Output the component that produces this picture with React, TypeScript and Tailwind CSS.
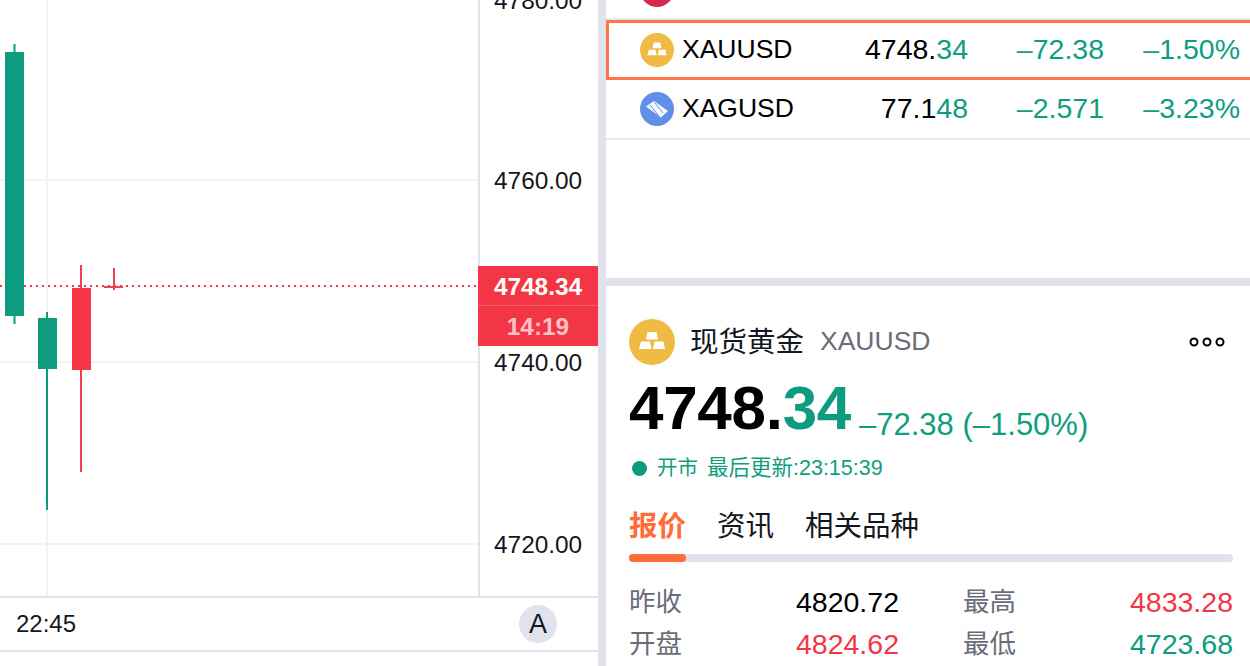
const FONT = "font-['Liberation_Sans','Noto_Sans_CJK_SC',sans-serif]";

const GoldIcon = ({ size }: { size: number }) => (
  <svg width={size} height={size} viewBox="0 0 46 46" className="shrink-0">
    <circle cx="23" cy="23" r="23" fill="#efbb45" />
    <path d="M18.5 13h9l1.5 7.5H17z" fill="#fff" />
    <path d="M12 22.5h9l1.5 7.5H10z" fill="#fff" />
    <path d="M25.500 22.500h9l1.500 7.500H24z" fill="#fff" />
  </svg>
);

const SilverIcon = () => (
  <svg width="34" height="34" viewBox="0 0 34 34" className="shrink-0">
    <circle cx="17" cy="17" r="17" fill="#5f8fe6" />
    <path d="M6 14.500L14 9l14 10-7 6.500z" fill="#fff" fillOpacity="0.95" />
    <path d="M10 13l8.500 10.500M14.500 10.500l8.500 10.500" stroke="#5f8fe6" strokeWidth="1" fill="none" />
  </svg>
);

const Row = ({
  icon,
  name,
  black,
  green,
  change,
  pct,
  selected,
  clipped,
}: {
  icon: React.ReactNode;
  name: string;
  black: string;
  green: string;
  change: string;
  pct: string;
  selected?: boolean;
  clipped?: boolean;
}) => (
  <div
    className={`flex h-[60px] items-center pr-[10px] text-[28.5px] text-[#0f9d80] ${
      selected ? "border-[3px] border-r-0 border-[#ff7448] pl-[31px]" : "border-b-2 border-[#e8e9ee] pl-[34px]"
    } ${clipped ? "pt-[2px]" : ""}`}
  >
    {icon}
    <span className="ml-[8px] w-[111px] text-[26.5px] text-black">{name}</span>
    <span className="mb-[2px] w-[175px] text-right">
      <span className="text-black">{black}</span>
      {green}
    </span>
    <span className="mb-[2px] w-[136px] text-right">{change}</span>
    <span className="mb-[2px] flex-1 text-right">{pct}</span>
  </div>
);

const Stat = ({ label, value, color }: { label: string; value: string; color: string }) => (
  <div className="flex items-center justify-between">
    <span className="text-[26.5px] text-[#6a6d78]">{label}</span>
    <span className={color}>{value}</span>
  </div>
);

export default function App() {
  return (
    <div className={`flex h-[666px] w-[1250px] overflow-hidden bg-white ${FONT}`}>
      {/* Chart */}
      <div className="flex w-[598px] shrink-0 flex-col">
        <div className="flex h-[596px]">
          <svg width="478" height="596" className="shrink-0">
            <g stroke="#f2f3f5" strokeWidth="2">
              <path d="M0 180H478M0 362H478M0 544H478M47 0V596" />
            </g>
            <path d="M0 286H478" stroke="#f23645" strokeWidth="2" strokeDasharray="2 4" />
            <g fill="#0d9c80" stroke="#0d9c80" strokeWidth="2">
              <path d="M14.500 44V324M47 312V510" />
              <path d="M5 52h19v264H5zM38 318h19v51H38z" stroke="none" />
            </g>
            <g fill="#f53747" stroke="#f23f50" strokeWidth="2">
              <path d="M81 265V472M114 268V290M104 287H123" />
              <path d="M72 288h19v82H72z" stroke="none" />
            </g>
          </svg>
          <div className="relative flex-1 border-l-2 border-[#e0e3eb] text-[24.4px] text-[#131722]">
            <span className="absolute left-[14px] top-[-13px] leading-[28px]">4780.00</span>
            <span className="absolute left-[14px] top-[167px] leading-[28px]">4760.00</span>
            <span className="absolute left-[14px] top-[349px] leading-[28px]">4740.00</span>
            <span className="absolute left-[14px] top-[531px] leading-[28px]">4720.00</span>
            <div className="absolute left-[-2px] top-[266px] flex h-[80px] w-[120px] flex-col bg-[#f23645] text-center">
              <span className="h-[40px] border-b border-[#f5606c] font-bold leading-[41px] text-white">4748.34</span>
              <span className="font-bold leading-[41px] text-[#fdc3c8]">14:19</span>
            </div>
          </div>
        </div>
        <div className="flex h-[56px] items-center justify-between border-y-2 border-[#e0e3eb] pl-[16px] pr-[41px] text-[24px] text-[#131722]">
          <span>22:45</span>
          <span className="flex h-[38px] w-[38px] items-center justify-center rounded-full bg-[#e0e3eb] text-[27px]">A</span>
        </div>
      </div>

      {/* Splitter */}
      <div className="w-[8px] shrink-0 bg-[#e0e3eb]" />

      {/* Right column */}
      <div className="flex min-w-0 flex-1 flex-col">
        <div className="h-[278px] overflow-hidden">
          <div className="mt-[-40px]">
            <Row
              clipped
              icon={
                <svg width="34" height="34" viewBox="0 0 34 34" className="shrink-0">
                  <circle cx="17" cy="17" r="17" fill="#d52b4a" />
                  <path d="M0 24H34V26.500H0z" fill="#fff" />
                </svg>
              }
              name="USDX"
              black="98.9"
              green="68"
              change="–0.36"
              pct="–0.36%"
            />
            <Row
              selected
              icon={<GoldIcon size={34} />}
              name="XAUUSD"
              black="4748."
              green="34"
              change="–72.38"
              pct="–1.50%"
            />
            <Row icon={<SilverIcon />} name="XAGUSD" black="77.1" green="48" change="–2.571" pct="–3.23%" />
          </div>
        </div>
        <div className="h-[8px] shrink-0 bg-[#e0e3eb]" />

        {/* Symbol details */}
        <div className="flex flex-1 flex-col pl-[23px] pr-[17px] pt-[33px]">
          <div className="flex h-[46px] items-center">
            <GoldIcon size={46} />
            <span className="ml-[15px] text-[28.5px] text-[#131722]">现货黄金</span>
            <span className="ml-[16px] text-[26.5px] text-[#6a6d78]">XAUUSD</span>
            <svg width="36" height="12" viewBox="0 0 36 12" className="ml-auto mr-[8px]" fill="none" stroke="#000" strokeWidth="2">
              <circle cx="5" cy="6" r="3.500" />
              <circle cx="18" cy="6" r="3.500" />
              <circle cx="31" cy="6" r="3.500" />
            </svg>
          </div>
          <div className="mt-[13px] flex h-[60px] items-end">
            <span className="text-[62px] font-bold leading-[60px] tracking-[-0.3px] text-black">
              4748.<span className="text-[#0d9c80]">34</span>
            </span>
            <span className="ml-[8px] text-[31px] leading-[26px] text-[#0f9d80]">–72.38 (–1.50%)</span>
          </div>
          <div className="mt-[18px] flex h-[24px] items-center text-[21.500px] text-[#0f9d80]">
            <span className="ml-[3px] mr-[10px] h-[15px] w-[15px] rounded-full bg-[#0d9c80]" />
            <span className="text-[20.500px]">开市</span>
            <span className="ml-[9px]">最后更新:23:15:39</span>
          </div>
          <div className="mt-[28px] flex text-[28.5px] leading-[36px] text-[#131722]">
            <span className="font-bold text-[#ff6c37]">报价</span>
            <span className="ml-[31px]">资讯</span>
            <span className="ml-[31px]">相关品种</span>
          </div>
          <div className="mt-[10px] h-[8px] rounded-full bg-[#e0e3eb]">
            <div className="h-full w-[57px] rounded-full bg-[#ff6c37]" />
          </div>
          <div className="mt-[22px] grid grid-cols-[270px_270px] gap-x-[64px] gap-y-[6px] text-[28.5px] leading-[36px]">
            <Stat label="昨收" value="4820.72" color="text-black" />
            <Stat label="最高" value="4833.28" color="text-[#f23645]" />
            <Stat label="开盘" value="4824.62" color="text-[#f23645]" />
            <Stat label="最低" value="4723.68" color="text-[#0d9c80]" />
          </div>
        </div>
      </div>
    </div>
  );
}
